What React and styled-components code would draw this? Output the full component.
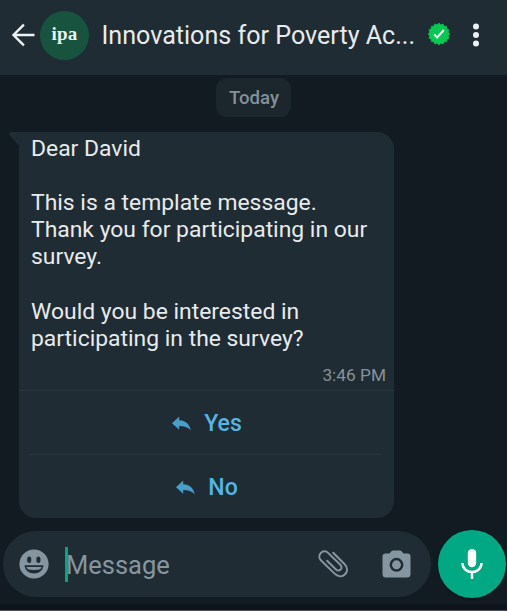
import React from "react";
import styled, { createGlobalStyle } from "styled-components";

const GlobalStyle = createGlobalStyle`
  * { box-sizing: border-box; }
  html, body { margin: 0; background: #fff; overflow: hidden; }
  button { border: 0; padding: 0; background: none; font: inherit; color: inherit; display: flex; }
  svg { display: block; flex: none; }
`;

const Screen = styled.div`
  width: 507px;
  height: 611px;
  display: flex;
  flex-direction: column;
  background: #121b22;
  border-bottom: 1px solid #4a4f55;
  color: #e7ebed;
  font-family: Roboto, "Liberation Sans", sans-serif;
  overflow: hidden;
`;

const Header = styled.header`
  flex: none;
  height: 75px;
  padding: 0 21px 5px 11px;
  display: flex;
  align-items: center;
  background: #202c33;
`;

const Avatar = styled.div`
  flex: none;
  width: 49px;
  height: 49px;
  margin: 0 12.5px 0 5px;
  padding-bottom: 3px;
  border-radius: 50%;
  background: #17533f;
  display: flex;
  align-items: center;
  justify-content: center;
  font: 700 19px/1 "Liberation Serif", serif;
  color: #e9f2ec;
  letter-spacing: 0.2px;
`;

const Title = styled.h1`
  margin: 1px 0 0;
  width: 326.5px;
  font-size: 25.1px;
  font-weight: 400;
  line-height: 34px;
  white-space: nowrap;
`;

const Conversation = styled.main`
  flex: none;
  height: 453px;
  padding: 3px 0 0 19px;
  display: flex;
  flex-direction: column;
`;

const DateChip = styled.div`
  width: 75px;
  height: 39px;
  margin-left: 197px;
  padding-left: 1px;
  border-radius: 11px;
  background: #1c272d;
  color: #84919a;
  font-size: 18.6px;
  font-weight: 500;
  line-height: 40px;
  text-align: center;
`;

const Bubble = styled.section`
  flex: none;
  position: relative;
  width: 375px;
  height: 386px;
  margin-top: 15px;
  border-radius: 0 17px 17px 17px;
  background: #202c33;
`;

const Tail = styled.svg`
  position: absolute;
  top: 0;
  left: -10px;
`;

const Body = styled.div`
  height: 258px;
  padding: 2.6px 8px 0 12px;
  display: flex;
  flex-direction: column;
`;

const Text = styled.p`
  margin: 0 0 27px;
  font-size: 22.9px;
  line-height: 27.2px;
  white-space: pre;
`;

const Time = styled.time`
  align-self: flex-end;
  margin-top: -16.6px;
  font-size: 17.3px;
  line-height: 24px;
  color: #85929a;
`;

const Reply = styled.button`
  width: ${(p) => (p.$inset ? "352px" : "375px")};
  height: 64px;
  margin: 0 ${(p) => (p.$inset ? "11px" : "0")};
  border-top: 1px solid #2b373e;
  align-items: center;
  justify-content: center;
  gap: 13px;
  padding: ${(p) => (p.$inset ? "2px 0 0 2px" : "2px 0 0 1px")};
  color: #53b5e4;
  font-size: 23.1px;
  font-weight: 500;
`;

const Composer = styled.footer`
  flex: none;
  height: 72px;
  padding-left: 3px;
  display: flex;
  align-items: center;
  gap: 7px;
`;

const NavStrip = styled.div`
  flex: 1;
  margin-top: 4px;
  background: #0d141b;
`;

const Field = styled.div`
  width: 428px;
  height: 66px;
  padding: 0 20px 0 16px;
  display: flex;
  align-items: center;
  border-radius: 33px;
  background: #202c33;
  color: #8696a0;
`;

const Caret = styled.span`
  width: 3px;
  height: 35px;
  margin-left: 16px;
  background: #00a884;
`;

const Placeholder = styled.span`
  width: 251px;
  margin: 1px 1px 0 -2px;
  font-size: 25.5px;
  line-height: 34px;
`;

const Camera = styled.button`
  margin-left: auto;
`;

const Mic = styled.button`
  width: 67.5px;
  height: 67.5px;
  flex: none;
  align-items: center;
  justify-content: center;
  border-radius: 50%;
  background: #00a884;
  box-shadow: 0 1px 2px #0a1116;
`;

const sealPoints = Array.from({ length: 32 }, (_, i) => {
  const r = i % 2 ? 9.4 : 10.9;
  const a = (i * Math.PI) / 16;
  return `${(11 + r * Math.sin(a)).toFixed(2)},${(11 - r * Math.cos(a)).toFixed(2)}`;
}).join(" ");

const BackIcon = () => (
  <svg width="24" height="24" viewBox="0 0 24 24" fill="none" stroke="#eef1f3" strokeWidth="2.4">
    <path d="M12.9 1.7 2.5 12l10.4 10.3M2.5 12h21" />
  </svg>
);

const Seal = styled.svg`
  margin: 0 0 3px 0;
  overflow: visible;
`;

const VerifiedIcon = () => (
  <Seal width="22" height="22" viewBox="0 0 22 22">
    <polygon points={sealPoints} fill="#05c950" stroke="#05c950" strokeWidth=".6" strokeLinejoin="round" />
    <path d="m6.200 11.400 3 3.100 6.600-7.500" fill="none" stroke="#f4fff7" strokeWidth="1.9" />
  </Seal>
);

const MenuButton = styled.button`
  margin-left: auto;
`;

const ReplyIcon = () => (
  <svg width="19" height="15" viewBox="0 0 19 15" fill="#459fca">
    <path d="M7.200.5v3.700c6.500.4 10.400 3.800 11.500 10.100C15.800 11.300 12.200 10 7.200 10v3.800L0 7.200Z" />
  </svg>
);

const SmileIcon = () => (
  <svg width="30" height="30" viewBox="0 0 30 30">
    <circle cx="15" cy="15" r="14.600" fill="#8696a0" />
    <ellipse cx="10.200" cy="10.700" rx="2.100" ry="3.200" fill="#202c33" />
    <ellipse cx="19.400" cy="10.700" rx="2.100" ry="3.200" fill="#202c33" />
    <path d="M5.500 16.200h19c-.5 5.300-4.500 8.200-9.500 8.200s-9-2.900-9.500-8.200Z" fill="#202c33" />
    <path d="M7.300 18h15.400l-1.400 2.300q-6.300 1.200-12.600 0Z" fill="#8696a0" />
  </svg>
);

const ClipIcon = () => (
  <svg width="31" height="28" viewBox="0 0 31 28" fill="none" stroke="#8696a0" strokeWidth="2" strokeLinecap="round">
    <path d="M15.200 2.700 26.700 14.300c6.800 7-2.600 16.200-9.600 9.800L3.100 10.500C-2 5.300 5.100-2 10.300 3.100L22.300 14.700c3.600 3.700-1.200 7.700-4.600 4.500L9.200 10.800" />
  </svg>
);

const CameraIcon = () => (
  <svg width="29" height="28" viewBox="0 0 29 28">
    <path d="M9.200 1.600Q10 .5 11.300.5h6.400q1.300 0 2.100 1.100L21.500 3.500h4Q28.500 3.500 28.500 6.500v17.500q0 3.500-3.500 3.500H4q-3.500 0-3.500-3.500v-17.500q0-3 3-3H7.500Z" fill="#8696a0" />
    <circle cx="14.500" cy="14.800" r="5.700" fill="#8696a0" stroke="#202c33" strokeWidth="2.500" />
  </svg>
);

const MicIcon = () => (
  <svg width="22" height="30" viewBox="0 0 22 30">
    <rect x="6.800" y="0" width="8.400" height="18.200" rx="4.200" fill="#fff" />
    <path d="M1.500 14c0 11.900 19 11.900 19 0M11 22.500V30" fill="none" stroke="#fff" strokeWidth="2.500" />
  </svg>
);

const message = `Dear David

This is a template message.
Thank you for participating in our
survey.

Would you be interested in
participating in the survey?`;

export default function App() {
  return (
    <>
      <GlobalStyle />
      <Screen>
        <Header>
          <button aria-label="Back"><BackIcon /></button>
          <Avatar>ipa</Avatar>
          <Title>Innovations for Poverty Ac...</Title>
          <VerifiedIcon />
          <MenuButton aria-label="Menu">
            <svg width="20" height="24" viewBox="0 0 20 24" fill="#eef1f3">
              <circle cx="10" cy="3.500" r="3" />
              <circle cx="10" cy="12" r="3" />
              <circle cx="10" cy="20.500" r="3" />
            </svg>
          </MenuButton>
        </Header>
        <Conversation>
          <DateChip>Today</DateChip>
          <Bubble>
            <Tail width="11" height="15" viewBox="0 0 11 15">
              <path d="M1 0H11V15L.3 3Q-.5 0 1.500 0Z" fill="#202c33" />
            </Tail>
            <Body>
              <Text>{message}</Text>
              <Time>3:46 PM</Time>
            </Body>
            <Reply><ReplyIcon />Yes</Reply>
            <Reply $inset><ReplyIcon />No</Reply>
          </Bubble>
        </Conversation>
        <Composer>
          <Field>
            <SmileIcon />
            <Caret />
            <Placeholder>Message</Placeholder>
            <ClipIcon />
            <Camera aria-label="Camera"><CameraIcon /></Camera>
          </Field>
          <Mic aria-label="Record"><MicIcon /></Mic>
        </Composer>
        <NavStrip />
      </Screen>
    </>
  );
}
